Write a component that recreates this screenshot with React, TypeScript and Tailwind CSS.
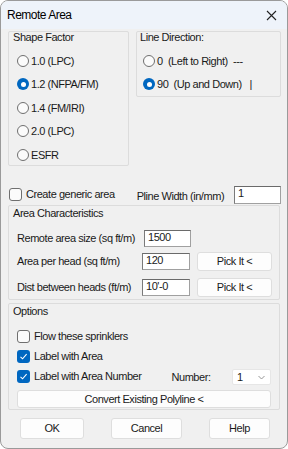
import React from "react";

function Radio({ label, checked = false }: { label: string; checked?: boolean }) {
  return (
    <div className="flex items-center h-[23.5px]">
      {checked ? (
        <span className="w-[12px] h-[12px] rounded-full bg-[#0067c0] flex items-center justify-center shrink-0">
          <span className="w-[5px] h-[5px] rounded-full bg-white" />
        </span>
      ) : (
        <span className="w-[12px] h-[12px] rounded-full border border-[#6f6f6f] bg-[#fbfbfb] shrink-0" />
      )}
      <span className="ml-[2px] whitespace-pre">{label}</span>
    </div>
  );
}

function Check({ label, checked = false }: { label: string; checked?: boolean }) {
  return (
    <div className="flex items-center whitespace-nowrap">
      {checked ? (
        <span className="w-[13px] h-[13px] rounded-[3px] bg-[#0067c0] flex items-center justify-center shrink-0">
          <svg width="9" height="9" viewBox="0 0 9 9" fill="none">
            <path d="M1.5 4.8 L3.6 6.8 L7.6 2.2" stroke="white" strokeWidth="1.1" />
          </svg>
        </span>
      ) : (
        <span className="w-[13px] h-[13px] rounded-[3px] border border-[#6f6f6f] bg-[#fbfbfb] shrink-0" />
      )}
      <span className="ml-[4px]">{label}</span>
    </div>
  );
}

function Field({ value, w, h = "h-[17px]" }: { value: string; w: string; h?: string }) {
  return (
    <div
      className={`${w} ${h} shrink-0 bg-white border border-[#a0a0a0] border-t-[#6a6a6a] border-l-[#7a7a7a] pl-[3px] leading-[13px]`}
    >
      {value}
    </div>
  );
}

function Btn({ label, className = "" }: { label: string; className?: string }) {
  return (
    <div
      className={`bg-[#fdfdfd] border border-[#dedede] rounded-[3px] flex items-center justify-center shrink-0 whitespace-nowrap ${className}`}
    >
      {label}
    </div>
  );
}

export default function App() {
  return (
    <div
      className="w-[288px] h-[449px] bg-[#f0f0f0] border border-[#9a9a9a] rounded-[8px] overflow-hidden flex flex-col text-[11px] tracking-[-0.45px] text-[#1a1a1a] whitespace-nowrap"
      style={{ fontFamily: '"Liberation Sans", Arial, sans-serif' }}
    >
      {/* title bar */}
      <div className="h-[28px] bg-[#eef3fa] flex items-center justify-between pl-[6px] pr-[10px] shrink-0">
        <span className="text-[12px] tracking-[-0.5px] text-black">Remote Area</span>
        <svg width="11" height="11" viewBox="0 0 11 11">
          <path d="M1 1 L10 10 M10 1 L1 10" stroke="#222" strokeWidth="1.1" />
        </svg>
      </div>

      {/* top groups */}
      <div className="flex items-start mt-[2px] pl-[7px] pr-[6px] gap-[7px]">
        <div className="w-[121px] h-[135px] shrink-0 border border-[#dcdcdc] rounded-[2px] pl-[8px]">
          <div className="-ml-[4px] leading-[14px] -mt-[2px] mb-[5px]">Shape Factor</div>
          <Radio label="1.0 (LPC)" />
          <Radio label="1.2 (NFPA/FM)" checked />
          <Radio label="1.4 (FM/IRI)" />
          <Radio label="2.0 (LPC)" />
          <Radio label="ESFR" />
        </div>
        <div className="flex-1 h-[66px] border border-[#dcdcdc] rounded-[2px] pl-[6px]">
          <div className="-ml-[3px] leading-[14px] -mt-[2px] mb-[5px]">Line Direction:</div>
          <Radio label="0  (Left to Right)  ---" />
          <Radio label="90  (Up and Down)   |" checked />
        </div>
      </div>

      {/* generic area row */}
      <div className="flex items-start mt-[20px] pl-[8px] pr-[6px] h-[18px]">
        <Check label="Create generic area" />
        <span className="ml-[22px] mt-[3px] leading-[14px]">Pline Width (in/mm)</span>
        <div className="ml-auto">
          <Field value="1" w="w-[47px]" h="h-[18px]" />
        </div>
      </div>

      {/* Area Characteristics */}
      <div className="mx-[7px] mt-[1px] h-[95px] border border-[#dcdcdc] rounded-[2px] pl-[8px]">
        <div className="-ml-[4px] leading-[14px]">Area Characteristics</div>
        <div className="flex items-center mt-[10px] h-[17px]">
          <span className="w-[127px]">Remote area size (sq ft/m)</span>
          <Field value="1500" w="w-[47px]" />
        </div>
        <div className="flex items-center mt-[5px] h-[19px]">
          <span className="w-[125px]">Area per head (sq ft/m)</span>
          <Field value="120" w="w-[48px]" />
          <Btn label="Pick It <" className="w-[75px] h-[19px] ml-[7px]" />
        </div>
        <div className="flex items-center mt-[7px] h-[19px]">
          <span className="w-[125px]">Dist between heads (ft/m)</span>
          <Field value="10'-0" w="w-[48px]" />
          <Btn label="Pick It <" className="w-[75px] h-[19px] ml-[7px]" />
        </div>
      </div>

      {/* Options */}
      <div className="mx-[7px] mt-[3px] h-[107px] border border-[#dcdcdc] rounded-[2px] pl-[8px] pr-[8px]">
        <div className="-ml-[4px] leading-[14px]">Options</div>
        <div className="mt-[8px] h-[20px] flex items-center">
          <Check label="Flow these sprinklers" />
        </div>
        <div className="h-[20px] flex items-center">
          <Check label="Label with Area" checked />
        </div>
        <div className="h-[20px] flex items-center">
          <Check label="Label with Area Number" checked />
          <span className="ml-[30px] mt-[3px]">Number:</span>
          <div className="ml-auto w-[39px] h-[16px] bg-white border border-[#e6e6e6] rounded-[2px] flex items-center justify-between pl-[4px] pr-[5px] mt-[2px]">
            <span>1</span>
            <svg width="7" height="5" viewBox="0 0 7 5">
              <path d="M0.5 1 L3.5 4 L6.5 1" stroke="#8a8a8a" fill="none" strokeWidth="0.9" />
            </svg>
          </div>
        </div>
        <Btn label="Convert Existing Polyline <" className="mt-[4px] h-[18px]" />
      </div>

      {/* footer buttons */}
      <div className="flex items-center mt-[8px] pl-[19px]">
        <Btn label="OK" className="w-[64px] h-[21px] border-[#7fb2e5]" />
        <Btn label="Cancel" className="w-[71px] h-[21px] ml-[27px]" />
        <Btn label="Help" className="w-[61px] h-[21px] ml-[27px]" />
      </div>
    </div>
  );
}
